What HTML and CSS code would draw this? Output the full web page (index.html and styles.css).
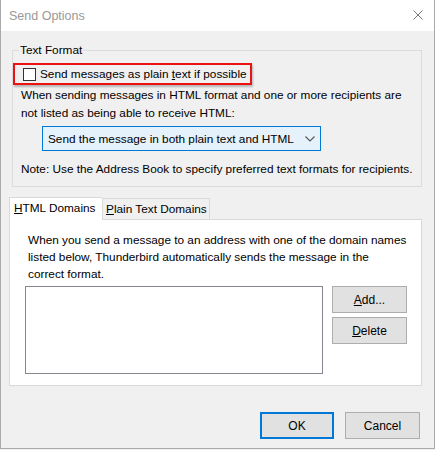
FILE: index.html
```html
<!DOCTYPE html>
<html lang="en">
<head>
  <meta charset="UTF-8" />
  <title>Send Options</title>
  <link rel="stylesheet" href="styles.css">
</head>
<body>
  <div class="window">
    <div class="titlebar">
      <span class="title">Send Options</span>
      <svg class="close" width="10" height="10" viewBox="0 0 10 10">
        <path d="M0.5 0.5 L9.5 9.5 M9.5 0.5 L0.5 9.5" stroke="#777" stroke-width="1" fill="none"/>
      </svg>
    </div>

    <div class="content">
      <fieldset class="group">
        <legend>Text Format</legend>
        <label class="plain-row">
          <span class="check"></span>
          <span>Send messages as plain <u>t</u>ext if possible</span>
        </label>
        <p class="text">When sending messages in HTML format and one or more recipients are not listed as being able to receive HTML:</p>
        <div class="select">
          <span>Send the message in both plain text and HTML</span>
          <svg width="10" height="6" viewBox="0 0 10 6">
            <path d="M0.5 0.5 L5 5 L9.5 0.5" stroke="#555" stroke-width="1.1" fill="none"/>
          </svg>
        </div>
        <p class="text note">Note: Use the Address Book to specify preferred text formats for recipients.</p>
      </fieldset>

      <div class="tabs">
        <div class="tab active"><u>H</u>TML Domains</div>
        <div class="tab"><u>P</u>lain Text Domains</div>
      </div>
      <div class="panel">
        <p class="text">When you send a message to an address with one of the domain names listed below, Thunderbird automatically sends the message in the correct&nbsp;format.</p>
        <div class="list-row">
          <div class="listbox"></div>
          <div class="side-buttons">
            <button class="btn"><u>A</u>dd...</button>
            <button class="btn"><u>D</u>elete</button>
          </div>
        </div>
      </div>

      <div class="footer">
        <button class="btn default">OK</button>
        <button class="btn">Cancel</button>
      </div>
    </div>
  </div>
</body>
</html>
```

FILE: styles.css
```css
html, body {
  margin: 0;
  padding: 0;
  background: #f0f0f0;
  font-family: "Liberation Sans", Arial, sans-serif;
  font-size: 11.8px;
  color: #000;
}

.window {
  width: 435px;
  height: 449px;
  box-sizing: border-box;
  border: 1px solid #aaa;
  border-top: none;
  background: #f0f0f0;
}

.titlebar {
  height: 31px;
  background: #fff;
  display: flex;
  align-items: center;
  padding: 0 11px 0 8px;
}

.title {
  flex: 1;
  color: #999;
  font-size: 12.5px;
  margin-top: 1px;
}

.close {
  margin-top: -1px;
}

.content {
  padding: 0 12px 0 11px;
}

.group {
  margin: 11px 0 0 0;
  padding: 2px 2px 8px 8px;
  border: 1px solid #dcdcdc;
}

.group legend {
  padding: 0 1px;
  margin-left: -2px;
  line-height: 16px;
}

.plain-row {
  display: flex;
  align-items: center;
  gap: 4px;
  box-sizing: border-box;
  width: 239px;
  height: 22px;
  margin: 3px 0 0 -8px;
  padding-left: 8px;
  border: 2px solid #ee1111;
  box-shadow: 1px 2px 2px rgba(0, 0, 0, 0.25);
}

.check {
  width: 11px;
  height: 11px;
  border: 1px solid #333;
  background: #fff;
}

.text {
  margin: 0;
  line-height: 18px;
}

.group .text {
  margin-top: 1px;
}

.select {
  display: flex;
  align-items: center;
  justify-content: space-between;
  box-sizing: border-box;
  width: 279px;
  height: 25px;
  margin: 4px 0 0 21px;
  padding: 0 5px 0 5px;
  border: 1px solid #0078d7;
  background: #e5f1fb;
}

.group .note {
  margin-top: 9px;
}

.tabs {
  display: flex;
  align-items: flex-end;
  margin: 9px 0 0 -3px;
  height: 23px;
}

.tab {
  box-sizing: border-box;
  width: 108px;
  height: 21px;
  line-height: 20px;
  padding-left: 3px;
  border: 1px solid #d9d9d9;
  border-bottom: none;
  background: #f0f0f0;
}

.tab.active {
  width: 93px;
  height: 23px;
  line-height: 21px;
  background: #fff;
  position: relative;
  top: 1px;
  padding-left: 4px;
  border-right: none;
}

.panel {
  margin: 0 0 0 -3px;
  width: 413px;
  height: 167px;
  box-sizing: border-box;
  border: 1px solid #d9d9d9;
  background: #fff;
  padding: 12px 2px 0 18px;
}

.panel .text {
  width: 381px;
  line-height: 17px;
}

.list-row {
  display: flex;
  gap: 9px;
  margin: 3px 0 0 -3px;
}

.listbox {
  width: 296px;
  height: 86px;
  border: 1px solid #828790;
  background: #fff;
}

.side-buttons {
  display: flex;
  flex-direction: column;
  gap: 4px;
}

.btn {
  width: 75px;
  height: 27px;
  box-sizing: border-box;
  border: 1px solid #adadad;
  background: #e1e1e1;
  font-family: inherit;
  font-size: 12px;
  color: #000;
  padding: 0;
}

.footer {
  display: flex;
  justify-content: flex-end;
  gap: 11px;
  margin-top: 26px;
  padding-right: 2px;
}

.btn.default {
  width: 74px;
  border: 2px solid #0078d7;
}
```
